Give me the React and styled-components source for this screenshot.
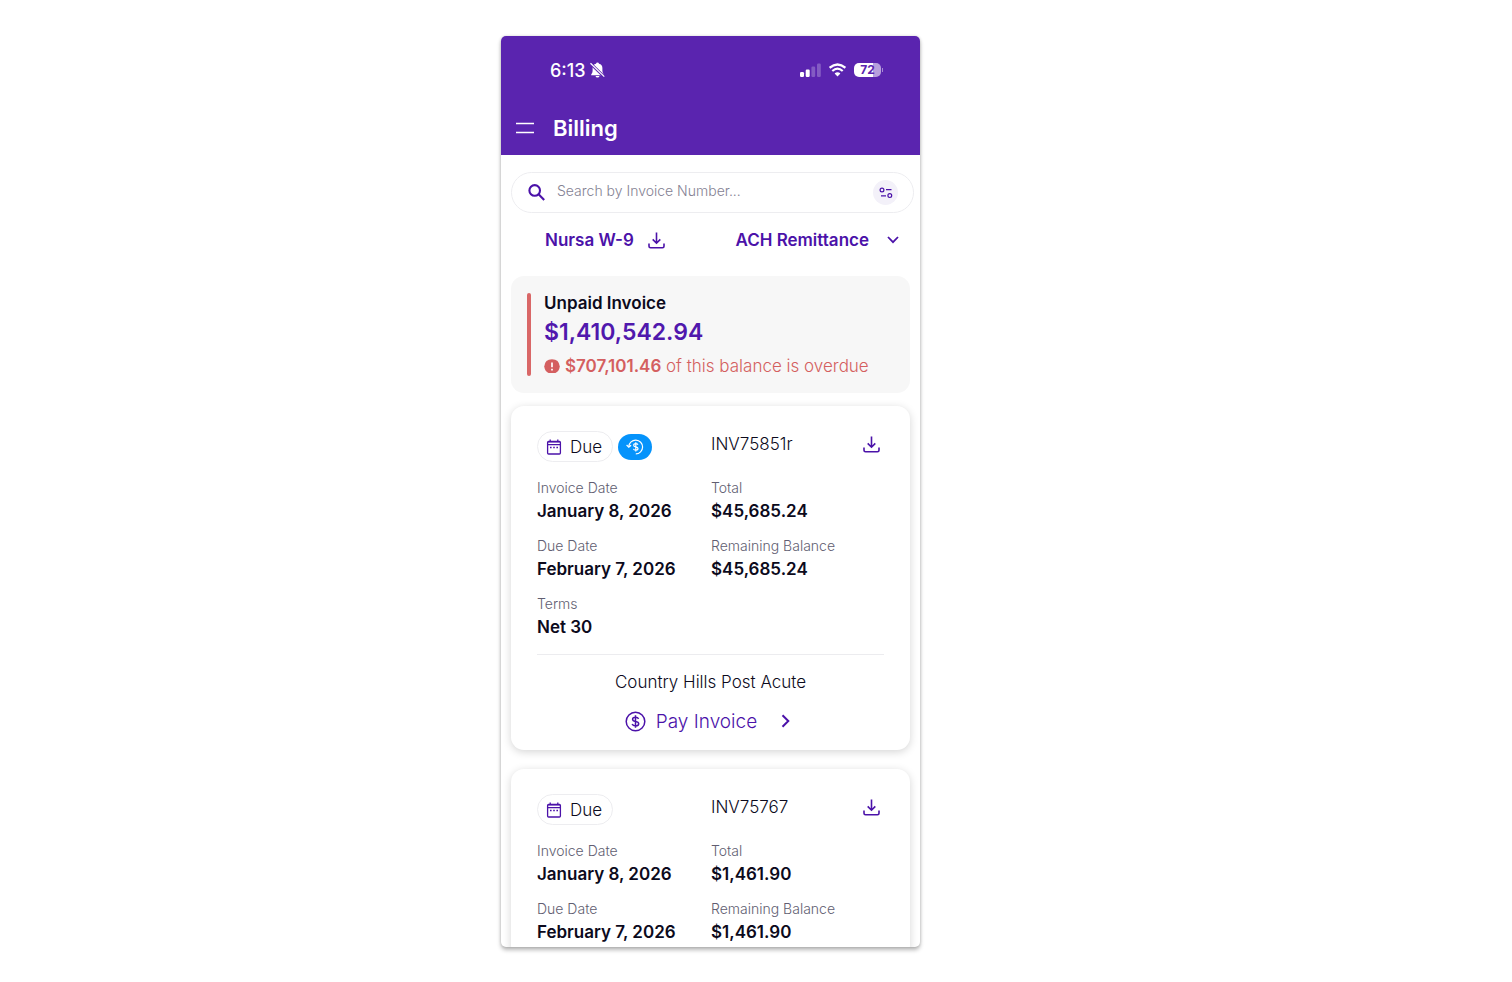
import styled, { createGlobalStyle } from "styled-components";

const GlobalStyle = createGlobalStyle`
  * {
    box-sizing: border-box;
  }
  body {
    margin: 0;
    background-color: #fff;
    color: #0c0a1c;
    font-family: Inter, "Liberation Sans", sans-serif;
  }
  button {
    font-family: inherit;
    color: #4b12a9;
    background: none;
    border: none;
    padding: 0;
    cursor: pointer;
  }
  svg {
    display: block;
    flex-shrink: 0;
  }
`;

const Page = styled.div`
  height: 100vh;
  padding: 36px 91px 35px 0;
  display: flex;
  justify-content: center;
`;

const Phone = styled.main`
  width: 100%;
  max-width: 419px;
  overflow: hidden;
  border-radius: 5px;
  background-color: #fff;
  box-shadow: 0 3px 4px rgba(0, 0, 0, 0.28), 0 0 3px rgba(0, 0, 0, 0.15);
`;

const Header = styled.header`
  background-color: #5a24af;
  color: #fff;
  padding: 22px 37px 11px 14px;
`;

const StatusBar = styled.div`
  height: 24px;
  padding-left: 35px;
  display: flex;
  align-items: center;
  gap: 8px;
`;

const Clock = styled.span`
  flex: 1;
  display: flex;
  align-items: center;
  gap: 4px;
  font-size: 18px;
  font-weight: 500;
`;

const Battery = styled.span`
  display: flex;
  align-items: center;
  gap: 1px;

  &::after {
    content: "";
    width: 1px;
    height: 4px;
    background-color: #a78bd3;
  }
`;

const BatteryBody = styled.span`
  width: 27px;
  height: 14px;
  border-radius: 5px;
  background: linear-gradient(to right, #fff 72%, #b79fdd 72%);
  color: #5a24af;
  font-size: 12px;
  font-weight: 700;
  line-height: 14px;
  text-align: center;
`;

const TitleBar = styled.div`
  margin-top: 30px;
  height: 32px;
  display: flex;
  align-items: center;
  gap: 18px;
`;

const MenuButton = styled.button`
  color: #fff;
`;

const Title = styled.h1`
  margin: 0;
  font-size: 22px;
  font-weight: 600;
`;

const Content = styled.div`
  padding: 17px 10px 0;
`;

const SearchBox = styled.label`
  height: 41px;
  margin-right: -4px;
  padding: 0 15px;
  display: flex;
  align-items: center;
  gap: 11px;
  border: 1px solid #ededf0;
  border-radius: 21px;
  color: #4b12a9;
`;

const SearchInput = styled.input`
  flex: 1;
  min-width: 0;
  padding: 0 0 5px;
  border: none;
  outline: none;
  background: none;
  font-family: inherit;
  font-size: 14px;
  font-weight: 300;
  color: #0c0a1c;

  &::placeholder {
    color: #858293;
    opacity: 1;
  }
`;

const FilterButton = styled.button`
  width: 25px;
  height: 25px;
  display: flex;
  align-items: center;
  justify-content: center;
  border-radius: 50%;
  background-color: #f3f1f9;
`;

const Links = styled.div`
  height: 24px;
  margin: 15px 11px 24px 34px;
  display: flex;
  justify-content: space-between;
`;

const LinkButton = styled.button`
  display: flex;
  align-items: center;
  gap: ${(props) => props.$gap};
  font-size: 17px;
  font-weight: 600;
`;

const Summary = styled.section`
  padding: 17px 16px;
  display: flex;
  gap: 13px;
  border-radius: 13px;
  background-color: #f7f7f7;

  &::before {
    content: "";
    width: 4px;
    border-radius: 2px;
    background-color: #d96767;
  }
`;

const SummaryTitle = styled.h2`
  margin: 0;
  font-size: 17px;
  font-weight: 600;
  line-height: 20px;
`;

const SummaryAmount = styled.p`
  margin: 0 0 5px;
  color: #5018ad;
  font-size: 23px;
  font-weight: 600;
  line-height: 38px;
`;

const Overdue = styled.p`
  margin: 0;
  display: flex;
  align-items: center;
  gap: 5px;
  color: #d45f60;
  font-size: 17px;
  font-weight: 300;
  line-height: 20px;
  white-space: nowrap;

  strong {
    font-weight: 600;
  }
`;

const Card = styled.article`
  margin: 13px 0 19px;
  padding: 25px 26px 14px;
  border-radius: 13px;
  background-color: #fff;
  box-shadow: 0 2px 8px rgba(0, 0, 0, 0.17);
`;

const Columns = styled.div`
  display: grid;
  grid-template-columns: 174px 1fr;
`;

const CardTop = styled(Columns)`
  height: 31px;
  margin-bottom: 15px;
  align-items: center;
`;

const Badges = styled.div`
  display: flex;
  align-items: center;
  gap: 5px;
`;

const Badge = styled.span`
  width: 76px;
  height: 31px;
  padding-left: 8px;
  display: flex;
  align-items: center;
  gap: 8px;
  border: 1px solid #ededf0;
  border-radius: 16px;
  font-size: 17px;
  font-weight: 300;
`;

const CreditBadge = styled.span`
  width: 34px;
  height: 26px;
  display: flex;
  align-items: center;
  justify-content: center;
  border-radius: 13px;
  background-color: #0593fb;
  color: #fff;
`;

const InvoiceNumber = styled.div`
  padding: 0 4px 5px 0;
  display: flex;
  align-items: center;
  justify-content: space-between;
  font-size: 17px;
  font-weight: 300;
`;

const Fields = styled(Columns).attrs({ as: "dl" })`
  margin: 0;
  row-gap: 12px;
`;

const Label = styled.dt`
  color: #615e71;
  font-size: 14px;
  font-weight: 300;
  line-height: 22px;
`;

const Value = styled.dd`
  margin: 0;
  font-size: 17px;
  font-weight: 600;
  line-height: 24px;
  white-space: nowrap;
`;

const Facility = styled.p`
  margin: 15px 0 12px;
  padding-top: 15px;
  border-top: 1px solid #ececef;
  font-size: 17px;
  font-weight: 300;
  line-height: 24px;
  text-align: center;
`;

const PayButton = styled.button`
  height: 30px;
  margin: 0 auto;
  display: flex;
  align-items: center;
  gap: 10px;
  font-size: 19px;
  font-weight: 300;

  svg:last-child {
    margin: 0 6px 0 14px;
  }
`;

const DownloadIcon = () => (
  <svg width="17" height="17" viewBox="0 0 17 17" fill="none" stroke="currentColor" strokeWidth="1.6">
    <path d="M8.5 0.5V11M4.7 7.4L8.5 11.2L12.3 7.4" />
    <path d="M1 11.5V14.2Q1 15.7 2.5 15.7H14.5Q16 15.7 16 14.2V11.5" />
  </svg>
);

const MutedBellIcon = () => (
  <svg width="15" height="16" viewBox="0 0 15 16">
    <path
      d="M1.2 12.4Q2.6 11 2.6 9V6Q2.6 2.6 6 1.7Q6.2 .4 7.5 .4Q8.8 .4 9 1.7Q12.4 2.6 12.4 6V9Q12.4 11 13.8 12.4V13.2H1.2ZM5.5 13.9H9.5Q9.1 15.5 7.5 15.5Q5.9 15.5 5.5 13.9Z"
      fill="#fff"
    />
    <path d="M0.5 1.5L14 14.5" stroke="#5a24af" strokeWidth="3" />
    <path d="M0.5 1.2L14.3 14.6" stroke="#fff" strokeWidth="1.2" />
  </svg>
);

const SignalIcon = () => (
  <svg width="21" height="14" viewBox="0 0 21 14" fill="#fff">
    <rect x="0" y="9" width="4" height="5" rx="1.2" />
    <rect x="5.7" y="6.5" width="4" height="7.5" rx="1.2" />
    <rect x="11.4" y="3.5" width="3.8" height="10.5" rx="1.2" opacity=".25" />
    <rect x="17" y="0.5" width="3.8" height="13.5" rx="1.2" opacity=".25" />
  </svg>
);

const WifiIcon = () => (
  <svg width="17" height="14" viewBox="0 0 17 14" fill="none" stroke="#fff" strokeWidth="2.2">
    <path d="M0.6 4.8Q8.5 -1.8 16.4 4.8" />
    <path d="M3.3 8Q8.5 3.4 13.7 8" />
    <path d="M5.6 10.5Q8.5 8 11.4 10.5L8.5 13.4Z" fill="#fff" stroke="none" />
  </svg>
);

const MenuIcon = () => (
  <svg width="20" height="12" viewBox="0 0 20 12" stroke="currentColor" strokeWidth="1.5">
    <path d="M1 1.5H19M1 10.5H19" />
  </svg>
);

const SearchIcon = () => (
  <svg width="19" height="18" viewBox="0 0 19 18" fill="none" stroke="currentColor" strokeWidth="2.1">
    <circle cx="7.7" cy="6.4" r="5.3" />
    <path d="M11.6 10.3L17.2 16" />
  </svg>
);

const FilterIcon = () => (
  <svg width="14" height="12" viewBox="0 0 14 12" fill="none" stroke="currentColor" strokeWidth="1.2">
    <circle cx="3" cy="3" r="1.9" />
    <path d="M7 2.6H12.5M2 8.8H7" />
    <circle cx="10.8" cy="8.6" r="1.9" />
  </svg>
);

const ChevronDownIcon = () => (
  <svg width="12" height="8" viewBox="0 0 12 8" fill="none" stroke="currentColor" strokeWidth="1.8">
    <path d="M1 1L6 6.2L11 1" />
  </svg>
);

const ChevronRightIcon = () => (
  <svg width="9" height="14" viewBox="0 0 9 14" fill="none" stroke="currentColor" strokeWidth="2">
    <path d="M1.5 1.2L7.3 7L1.5 12.8" />
  </svg>
);

const AlertIcon = () => (
  <svg width="16" height="14" viewBox="0 0 16 14">
    <path d="M4.5 14Q0.3 12 0.3 7.3Q0.9 0.2 8 0.2Q15.1 0.2 15.7 7.3Q15.7 12 11.5 14Z" fill="#d45f60" />
    <path d="M8 3.6V8.2M8 9.8V11.6" stroke="#fff" strokeWidth="1.7" />
  </svg>
);

const CalendarIcon = () => (
  <svg width="16" height="16" viewBox="0 0 16 16" fill="none" stroke="#4b12a9" strokeWidth="1.3">
    <rect x="1.6" y="2.4" width="12.8" height="12.6" rx="1" />
    <path d="M2 2.8H14" strokeWidth="1.6" />
    <path d="M4.2 0.4V3M11.8 0.4V3M2 5.7H14" />
    <path d="M4 8.5H5.6M7.2 8.5H8.8M10.4 8.5H12" strokeWidth="1.3" />
  </svg>
);

const CreditIcon = () => (
  <svg width="18" height="16" viewBox="0 0 18 16" fill="none" stroke="currentColor" strokeWidth="1.2">
    <path d="M2.8 7.6A6.9 6.9 0 1 1 9.8 14.9" />
    <path d="M0.6 6L2.8 8.2L5.1 6.2" />
    <path d="M12 5.8Q11.4 4.7 9.7 4.7Q7.7 4.7 7.7 6.2Q7.7 7.5 9.7 7.8Q12 8.1 12 9.6Q12 11.2 9.8 11.2Q7.9 11.2 7.4 9.9M9.8 3.3V12.6" />
  </svg>
);

const DollarIcon = () => (
  <svg width="21" height="21" viewBox="0 0 21 21" fill="none" stroke="currentColor" strokeWidth="1.5">
    <circle cx="10.5" cy="10.5" r="9.3" />
    <path d="M13.6 7.8Q12.8 6.2 10.5 6.2Q7.6 6.2 7.6 8.2Q7.6 9.9 10.5 10.4Q13.7 10.9 13.7 12.8Q13.7 14.9 10.6 14.9Q7.9 14.9 7.1 13M10.5 4.3V16.7" />
  </svg>
);

const invoices = [
  {
    number: "INV75851r",
    credit: true,
    facility: "Country Hills Post Acute",
    fields: [
      ["Invoice Date", "January 8, 2026"],
      ["Total", "$45,685.24"],
      ["Due Date", "February 7, 2026"],
      ["Remaining Balance", "$45,685.24"],
      ["Terms", "Net 30"],
    ],
  },
  {
    number: "INV75767",
    fields: [
      ["Invoice Date", "January 8, 2026"],
      ["Total", "$1,461.90"],
      ["Due Date", "February 7, 2026"],
      ["Remaining Balance", "$1,461.90"],
    ],
  },
];

const InvoiceCard = ({ invoice }) => {
  return (
    <Card>
      <CardTop>
        <Badges>
          <Badge>
            <CalendarIcon />
            Due
          </Badge>
          {invoice.credit && (
            <CreditBadge>
              <CreditIcon />
            </CreditBadge>
          )}
        </Badges>
        <InvoiceNumber>
          {invoice.number}
          <button aria-label={`Download ${invoice.number}`}>
            <DownloadIcon />
          </button>
        </InvoiceNumber>
      </CardTop>
      <Fields>
        {invoice.fields.map(([label, value]) => (
          <div key={label}>
            <Label>{label}</Label>
            <Value>{value}</Value>
          </div>
        ))}
      </Fields>
      {invoice.facility && (
        <>
          <Facility>{invoice.facility}</Facility>
          <PayButton>
            <DollarIcon />
            Pay Invoice
            <ChevronRightIcon />
          </PayButton>
        </>
      )}
    </Card>
  );
};

const App = () => {
  return (
    <Page>
      <GlobalStyle />
      <Phone>
        <Header>
          <StatusBar>
            <Clock>
              6:13
              <MutedBellIcon />
            </Clock>
            <SignalIcon />
            <WifiIcon />
            <Battery>
              <BatteryBody>72</BatteryBody>
            </Battery>
          </StatusBar>
          <TitleBar>
            <MenuButton aria-label="Menu">
              <MenuIcon />
            </MenuButton>
            <Title>Billing</Title>
          </TitleBar>
        </Header>
        <Content>
          <SearchBox>
            <SearchIcon />
            <SearchInput type="text" aria-label="Search invoices" placeholder="Search by Invoice Number..." />
            <FilterButton aria-label="Filters">
              <FilterIcon />
            </FilterButton>
          </SearchBox>
          <Links>
            <LinkButton $gap="14px">
              Nursa W-9
              <DownloadIcon />
            </LinkButton>
            <LinkButton $gap="18px">
              ACH Remittance
              <ChevronDownIcon />
            </LinkButton>
          </Links>
          <Summary>
            <div>
              <SummaryTitle>Unpaid Invoice</SummaryTitle>
              <SummaryAmount>$1,410,542.94</SummaryAmount>
              <Overdue>
                <AlertIcon />
                <span>
                  <strong>$707,101.46</strong> of this balance is overdue
                </span>
              </Overdue>
            </div>
          </Summary>
          {invoices.map((invoice) => (
            <InvoiceCard invoice={invoice} key={invoice.number} />
          ))}
        </Content>
      </Phone>
    </Page>
  );
};

export default App;
